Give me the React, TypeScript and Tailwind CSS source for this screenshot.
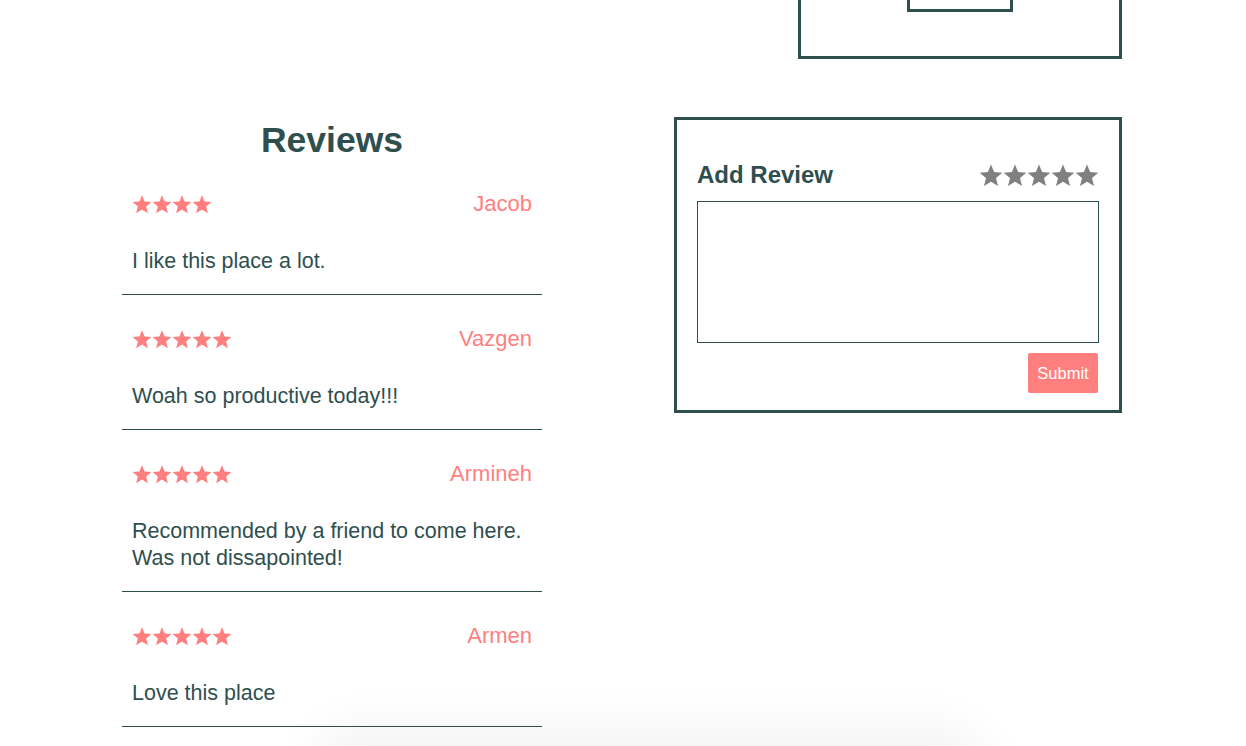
const reviews = [
    { id: 1, name: "Jacob", rating: 4, text: "I like this place a lot." },
    { id: 2, name: "Vazgen", rating: 5, text: "Woah so productive today!!!" },
    { id: 3, name: "Armineh", rating: 5, text: "Recommended by a friend to come here. Was not dissapointed!" },
    { id: 4, name: "Armen", rating: 5, text: "Love this place" },
];

const Star = ({ size, color }: { size: number; color: string }) => (
    <svg width={size} height={size} viewBox="0 0 24 24" fill={color}>
        <path d="M12 1.5l3.1 7.6 8.2.6-6.3 5.3 2 8-7-4.3-7 4.3 2-8L.7 9.7l8.2-.6z" />
    </svg>
);

const App = () => {
    return (
        <div className="relative min-h-[746px] overflow-hidden bg-white font-['Liberation_Sans',Arial,sans-serif] text-[#2f4f4f]">
            <div className="ml-[122px] w-[1000px]">
                {/* TOP BOX */}
                <div className="flex justify-end">
                    <div className="flex h-[59px] w-[324px] justify-center border-x-[3px] border-b-[3px] border-[#2f4f4f]">
                        <div className="h-[12px] w-[106px] border-x-[3px] border-b-[3px] border-[#2f4f4f]"></div>
                    </div>
                </div>

                <div className="mt-[58px] flex justify-between">
                    {/* REVIEWS */}
                    <div className="w-[420px]">
                        <h2 className="mt-[3px] text-center text-[35.5px] font-bold leading-[40px]">Reviews</h2>
                        {reviews.map((r) => (
                            <div key={r.id} className="border-b border-[#2f4f4f] px-[10px] pt-[30px] pb-[19px] first:pt-[30px] first:pb-[20px]">
                                <div className="flex h-[27px] items-center justify-between">
                                    <div className="flex">
                                        {Array.from({ length: r.rating }).map((_, i) => (
                                            <Star key={i} size={20} color="#ff7f7f" />
                                        ))}
                                    </div>
                                    <span className="text-[22px] text-[#ff7f7f]">{r.name}</span>
                                </div>
                                <p className="mt-[31px] text-[21.5px] leading-[27px]">{r.text}</p>
                            </div>
                        ))}
                    </div>

                    {/* ADD REVIEW */}
                    <div className="h-[296px] w-[448px] border-[3px] border-[#2f4f4f] px-[20px] pt-[40px]">
                        <div className="flex items-center justify-between">
                            <h3 className="text-[24px] font-bold leading-[30px]">Add Review</h3>
                            <div className="flex">
                                {Array.from({ length: 5 }).map((_, i) => (
                                    <Star key={i} size={24} color="#808080" />
                                ))}
                            </div>
                        </div>
                        <textarea className="mt-[11px] block h-[142px] w-[402px] resize-none border border-[#2f4f4f] outline-none"></textarea>
                        <div className="mt-[10px] flex justify-end pr-[1px]">
                            <button className="h-[40px] w-[70px] rounded-[2px] bg-[#ff7f7f] text-[16.5px] text-white">Submit</button>
                        </div>
                    </div>
                </div>
            </div>

            {/* faint shadow of element below the fold */}
            <div className="absolute -bottom-[70px] left-[330px] h-[70px] w-[640px] rounded-full shadow-[0_0_50px_20px_rgba(0,0,0,0.05)]"></div>
        </div>
    );
};

export default App;
